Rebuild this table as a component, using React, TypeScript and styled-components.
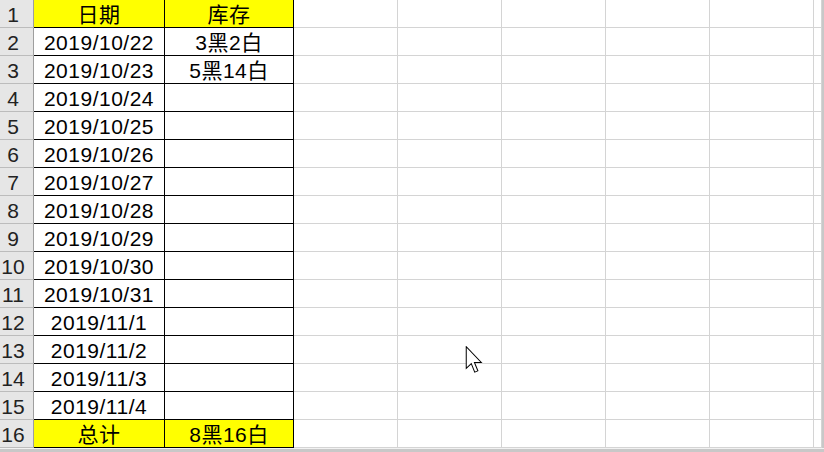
import React from "react";
import styled, { createGlobalStyle } from "styled-components";

const Global = createGlobalStyle`
  html, body { margin: 0; padding: 0; background: #ffffff; overflow: hidden; }
  body { width: 824px; height: 452px; }
  * { box-sizing: border-box; }
`;

const Sheet = styled.div`
  position: relative;
  width: 824px;
  height: 452px;
  display: flex;
  flex-direction: column;
  font-family: "Liberation Sans", Arial, "Noto Sans CJK SC", sans-serif;
  font-size: 21px;
  color: #000;
  overflow: hidden;
`;

const Grid = styled.div`
  display: grid;
  grid-template-columns: 34px 131px 129px repeat(5, 104px) 8px 2px;
  grid-auto-rows: 28px;
`;

const RowHead = styled.div`
  background: #e6e6e6;
  border-right: 1px solid #9e9e9e;
  border-bottom: 1px solid #bcbcbc;
  color: #222;
  line-height: 27px;
  padding: 1px 7px 0 0;
  text-align: center;
  white-space: nowrap;
`;

const DataCell = styled.div<{ $fill?: boolean }>`
  background: ${(p) => (p.$fill ? "#ffff00" : "#ffffff")};
  border-right: 1px solid #000;
  border-bottom: 1px solid #000;
  line-height: 27px;
  padding-top: 1px;
  letter-spacing: 0.5px;
  text-align: center;
  white-space: nowrap;
  overflow: hidden;
`;

const EmptyCell = styled.div`
  border-right: 1px solid #d4d4d4;
  border-bottom: 1px solid #d4d4d4;
`;

const EdgeStrip = styled.div`
  background: #c8c8c8;
`;

const BottomStrip = styled.div`
  height: 4px;
  border-top: 1px solid #f2f2f2;
  background: #c8c8c8;
`;

const Pointer = styled.svg`
  position: absolute;
  left: 465px;
  top: 346px;
  width: 19px;
  height: 28px;
`;

const rows: { a: string; b: string; fill?: boolean }[] = [
  { a: "日期", b: "库存", fill: true },
  { a: "2019/10/22", b: "3黑2白" },
  { a: "2019/10/23", b: "5黑14白" },
  { a: "2019/10/24", b: "" },
  { a: "2019/10/25", b: "" },
  { a: "2019/10/26", b: "" },
  { a: "2019/10/27", b: "" },
  { a: "2019/10/28", b: "" },
  { a: "2019/10/29", b: "" },
  { a: "2019/10/30", b: "" },
  { a: "2019/10/31", b: "" },
  { a: "2019/11/1", b: "" },
  { a: "2019/11/2", b: "" },
  { a: "2019/11/3", b: "" },
  { a: "2019/11/4", b: "" },
  { a: "总计", b: "8黑16白", fill: true },
];

export default function App() {
  return (
    <>
      <Global />
      <Sheet>
        <Grid>
          {rows.map((r, i) => (
            <React.Fragment key={i}>
              <RowHead>{i + 1}</RowHead>
              <DataCell $fill={r.fill}>{r.a}</DataCell>
              <DataCell $fill={r.fill}>{r.b}</DataCell>
              {[0, 1, 2, 3, 4, 5].map((c) => (
                <EmptyCell key={c} />
              ))}
              <EdgeStrip />
            </React.Fragment>
          ))}
        </Grid>
        <BottomStrip />
        <Pointer viewBox="0 0 12.5 19.5">
          <path
            d="M0.5 0.5 L0.5 15.5 L4 12.2 L6.4 18.2 L8.6 17.3 L6.2 11.5 L11 11.5 Z"
            fill="#ffffff"
            stroke="#000000"
            strokeWidth="0.7"
            strokeLinejoin="miter"
          />
        </Pointer>
      </Sheet>
    </>
  );
}
